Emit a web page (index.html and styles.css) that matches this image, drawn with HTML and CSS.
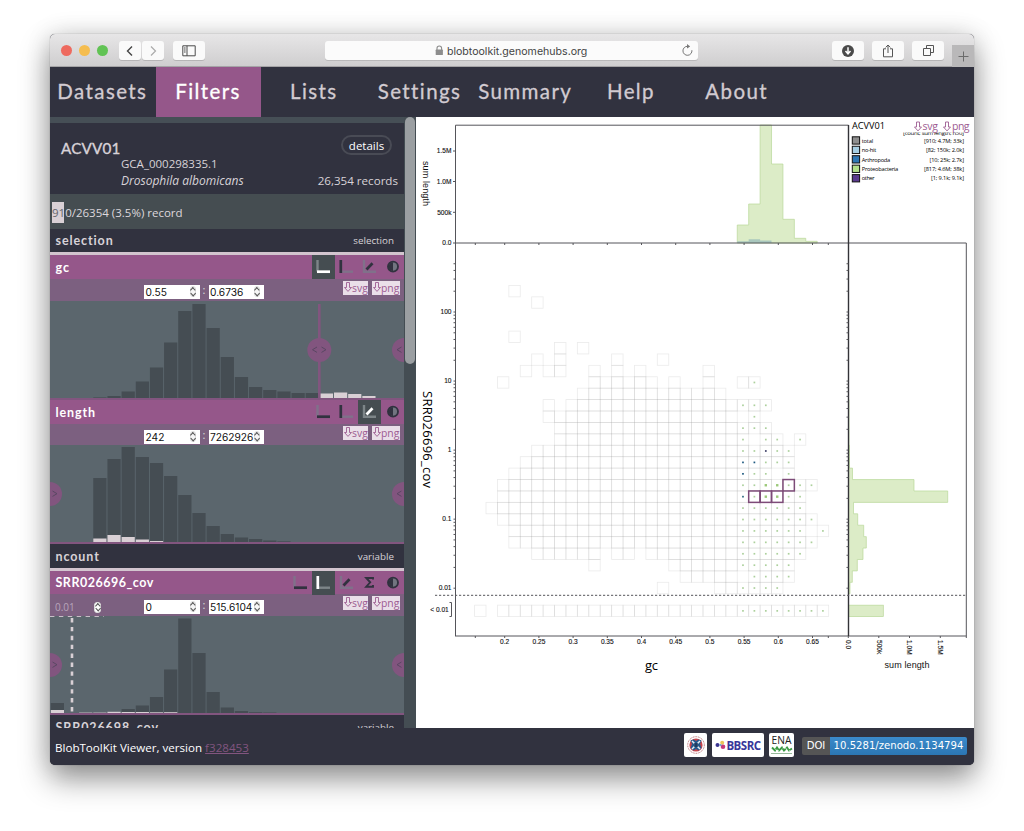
FILE: index.html
```
<!DOCTYPE html>
<html lang="en">
<head>
<meta charset="utf-8">
<title>BlobToolKit Viewer</title>
<link rel="stylesheet" href="styles.css">
</head>
<body>
<svg class="defs" width="0" height="0">
  <defs>
    <g id="i-x"><path class="dim" d="M1.500 1v11.500"/><path class="hot" d="M1 12.700h13"/></g>
    <g id="i-y"><path class="dim" d="M1 12.700h13"/><path class="hot" d="M1.800 1v13"/></g>
    <g id="i-z"><path class="dim" d="M2 1v11.700h12"/><path class="hot" d="M4.500 10.500l6-6.200"/></g>
    <g id="i-s"><path class="sig" d="M11 4.600V3H4.200l4 4.300-4 4.400H11V10"/></g>
    <g id="i-c"><circle class="ring" cx="8" cy="7.600" r="5"/><path class="half" d="M8 3.200a4.400 4.400 0 0 0 0 8.800z"/></g>
    <path id="i-down" d="M2.500.5h3v5h2L4 9.400.5 5.500h2z" fill="none" stroke="#9d5c92" stroke-width=".9"/>
  </defs>
</svg>
<div class="window">
  <div class="toolbar">
    <div class="lights"><i class="red"></i><i class="yellow"></i><i class="green"></i></div>
    <div class="pair">
      <span class="btn"><svg width="10" height="12"><path d="M7 1.500L2.500 6 7 10.500" fill="none" stroke="#444" stroke-width="1.400"/></svg></span>
      <span class="btn"><svg width="10" height="12"><path d="M3 1.500L7.500 6 3 10.500" fill="none" stroke="#aaa" stroke-width="1.200"/></svg></span>
    </div>
    <span class="btn wide side"><svg width="14" height="12"><path d="M.8.8h12.400v10H.8zM5 .8v10M2 3h1.600M2 5h1.600M2 7h1.600" fill="none" stroke="#4a4a4a"/></svg></span>
    <div class="address">
      <svg class="lock" width="9" height="11"><path d="M2 5V3.300a2.300 2.300 0 0 1 4.600 0V5" fill="none" stroke="#8d8d8d" stroke-width="1.100"/><rect x=".7" y="4.600" width="7.200" height="5.400" rx=".6" fill="#8d8d8d"/></svg>
      <span class="url">blobtoolkit.genomehubs.org</span>
      <svg class="reload" width="13" height="13"><path d="M10.900 6.200A4.500 4.500 0 1 1 6.500 2.300" fill="none" stroke="#777"/><path d="M6 0l3.200 2.400L6 4.600z" fill="#777"/></svg>
    </div>
    <div class="actions">
      <span class="btn wide"><svg width="14" height="14"><circle cx="7" cy="7" r="6" fill="#4a4a4a"/><path d="M7 3.300v6M4.500 7L7 9.800 9.500 7" fill="none" stroke="#fff" stroke-width="1.500"/></svg></span>
      <span class="btn wide"><svg width="12" height="14"><path d="M4 4.800H1.500v8h9v-8H8M6 9V1.200M3.700 3.400L6 1l2.300 2.400" fill="none" stroke="#555"/></svg></span>
      <span class="btn wide"><svg width="13" height="13"><path d="M1.500 4.500h7v7h-7zM4.500 4V1.500h7v7H9" fill="none" stroke="#555"/></svg></span>
    </div>
    <span class="plus"><svg width="11" height="11"><path d="M5.500.5v10M.5 5.500h10" stroke="#6b6b6b"/></svg></span>
  </div>

  <nav class="nav">
    <a><span>Datasets</span></a><a class="current"><span>Filters</span></a><a><span>Lists</span></a><a><span>Settings</span></a><a><span>Summary</span></a><a><span>Help</span></a><a><span>About</span></a>
  </nav>

  <div class="main">
    <div class="sidebar">
      <div class="scroller">
        <section class="dataset">
          <div class="top"><h1>ACVV01</h1><span class="details">details</span></div>
          <p class="accession">GCA_000298335.1</p>
          <p class="taxon"><em>Drosophila albomicans</em><span>26,354 records</span></p>
        </section>
        <div class="count"><span class="fill"></span><span class="label"><b>91</b>0/26354 (3.5%) record</span></div>
        <div class="closed first"><h2>selection</h2><span>selection</span></div>

        <section class="filter">
          <header><h2>gc</h2>
            <div class="icons">
              <span class="on"><svg><use href="#i-x"/></svg></span><span><svg><use href="#i-y"/></svg></span><span><svg><use href="#i-z"/></svg></span><span><svg><use href="#i-c"/></svg></span>
            </div>
          </header>
          <div class="range">
            <span class="field">0.55<i class="step"></i></span><em>:</em><span class="field">0.6736<i class="step"></i></span>
            <span class="save"><svg><use href="#i-down"/></svg>svg</span><span class="save"><svg><use href="#i-down"/></svg>png</span>
          </div>
          <svg class="hist" id="hist-gc" viewBox="0 0 354 97"></svg>
        </section>

        <section class="filter length">
          <header><h2>length</h2>
            <div class="icons">
              <span><svg><use href="#i-x"/></svg></span><span><svg><use href="#i-y"/></svg></span><span class="on"><svg><use href="#i-z"/></svg></span><span><svg><use href="#i-c"/></svg></span>
            </div>
          </header>
          <div class="range">
            <span class="field">242<i class="step"></i></span><em>:</em><span class="field">7262926<i class="step"></i></span>
            <span class="save"><svg><use href="#i-down"/></svg>svg</span><span class="save"><svg><use href="#i-down"/></svg>png</span>
          </div>
          <svg class="hist" id="hist-length" viewBox="0 0 354 97"></svg>
        </section>

        <div class="closed second"><h2>ncount</h2><span>variable</span></div>

        <section class="filter cov">
          <header><h2>SRR026696_cov</h2>
            <div class="icons">
              <span><svg><use href="#i-x"/></svg></span><span class="on"><svg><use href="#i-y"/></svg></span><span><svg><use href="#i-z"/></svg></span><span><svg><use href="#i-s"/></svg></span><span><svg><use href="#i-c"/></svg></span>
            </div>
          </header>
          <div class="range">
            <span class="clamp">0.01<i class="step"></i></span>
            <span class="field">0<i class="step"></i></span><em>:</em><span class="field">515.6104<i class="step"></i></span>
            <span class="save"><svg><use href="#i-down"/></svg>svg</span><span class="save"><svg><use href="#i-down"/></svg>png</span>
          </div>
          <svg class="hist" id="hist-cov" viewBox="0 0 354 97"></svg>
        </section>

        <div class="closed last"><h2>SRR026698_cov</h2><span>variable</span></div>
      </div>
      <div class="track"><div class="thumb"></div></div>
    </div>
    <svg class="plot" id="plot" viewBox="416 117 558 611">
      <g id="bars"></g>
      <g id="cells"></g>
      <g id="axes"></g>
      <g class="axis-title">
        <text transform="translate(422.500 391) rotate(90)" font-size="13" textLength="97">SRR026696_cov</text>
        <text x="645" y="670" font-size="13" textLength="13">gc</text>
      </g>
      <g class="small-title">
        <text transform="translate(423 161) rotate(90)" textLength="45">sum length</text>
        <text x="884.500" y="668" textLength="45">sum length</text>
      </g>
      <g id="legend">
        <text x="852" y="129" font-size="9.200" textLength="33">ACVV01</text>
        <text x="903" y="135" font-size="6" textLength="61">[count; sum length; n50]</text>
        <rect x="895" y="124" width="78" height="8.500" fill="#fff"/>
      </g>
      <g class="download">
        <use href="#i-down" x="914" y="121.500"/><text x="922.500" y="129.500" textLength="15.500">svg</text>
        <use href="#i-down" x="943" y="121.500"/><text x="952" y="129.500" textLength="17.500">png</text>
      </g>
    </svg>
  </div>

  <footer class="footer">
    <span class="version">BlobToolKit Viewer, version <a>f328453</a></span>
    <div class="logos">
      <span class="logo crest"><svg width="18" height="18"><circle cx="9" cy="9" r="8.300" fill="none" stroke="#b56a70" stroke-width="1" stroke-dasharray="1 .7"/><circle cx="9" cy="9" r="6.600" fill="#c9444c"/><path d="M3.500 4.500l3-1L9 5l2.500-1.500 3 1L13 8l1.500 4-3 2.500L9 13l-2.500 1.500-3-2.500L5 8z" fill="#245b8f"/><path d="M5 5l8 8M13 5l-8 8" stroke="#e8eef3" stroke-width="1.500"/><rect x="7.200" y="7" width="3.600" height="4" fill="#1c3c63"/></svg></span>
      <span class="logo bbsrc"><svg width="11" height="12"><circle cx="2.500" cy="6" r="2" fill="#3a3390"/><circle cx="7.200" cy="3.800" r="2" fill="#ecc45a"/><circle cx="8" cy="7.800" r="2.300" fill="#c7397c"/><circle cx="5.500" cy="6" r="1.100" fill="#6ea0d0"/></svg><b>BBSRC</b></span>
      <span class="logo ena"><b>ENA</b><svg width="22" height="9"><path d="M1 1.500l3 3 2-3 2 3 3-3 2 3 3-3 2 3 3-2" fill="none" stroke="#3c9a45" stroke-width="1.900" stroke-dasharray="5 .6"/><path d="M0 7.500h21" stroke="#7ca883" stroke-width=".8"/></svg></span>
      <span class="doi"><i>DOI</i><b>10.5281/zenodo.1134794</b></span>
    </div>
  </footer>
</div>
<script src="charts.js"></script>
</body>
</html>
```
FILE: styles.css
```
* { box-sizing: border-box; }
body { margin: 0; padding: 34px 50px; height: 831px; background: #fff; font-family: "Open Sans", "Noto Sans", sans-serif; overflow: hidden; }
h1, h2, p { margin: 0; font-weight: 400; }
svg { display: block; flex: none; }
.defs { position: absolute; }
.window {
  width: 924px; height: 731px; display: flex; flex-direction: column;
  border-radius: 5px; overflow: hidden; background: #31323f;
  box-shadow: 0 14px 30px rgba(0, 0, 0, .42), 0 0 26px rgba(0, 0, 0, .12), 0 0 1px rgba(0, 0, 0, .5);
}

/* browser chrome */
.toolbar { height: 33px; flex: none; display: flex; align-items: flex-start; background: linear-gradient(#e7e6e7, #cfcecf); border-bottom: 1px solid #a5a4a6; padding-left: 11px; }
.lights { display: flex; gap: 6.500px; margin-top: 11px; }
.lights i { width: 11.300px; height: 11.300px; border-radius: 50%; }
.red { background: #ee6a5f; }
.yellow { background: #f5bd4f; }
.green { background: #61c354; }
.pair { display: flex; gap: 1px; margin: 7px 0 0 11px; }
.btn { width: 22px; height: 19px; border-radius: 3px; background: #fafafa; box-shadow: 0 1px 0 rgba(0, 0, 0, .14); display: flex; align-items: center; justify-content: center; }
.btn.wide { width: 32px; }
.side { margin: 7px 0 0 9px; }
.address { width: 373px; height: 19px; margin: 7px 0 0 120.500px; border-radius: 3px; background: #fbfbfb; box-shadow: 0 1px 0 rgba(0, 0, 0, .12); display: flex; align-items: center; padding-left: 109.500px; }
.url { font: 10.600px Inter, sans-serif; color: #444; margin: 2px 0 0 3px; flex: 1; white-space: nowrap; }
.reload { margin-right: 4px; }
.actions { display: flex; gap: 8px; margin: 7px 0 0 134px; }
.plus { width: 22px; height: 22px; margin: 11px 0 0 auto; background: #b9b8b9; display: flex; align-items: center; justify-content: center; }

/* navigation */
.nav { height: 50px; flex: none; display: flex; width: 740px; }
.nav a { flex: 1 1 0; display: flex; align-items: center; justify-content: center; color: #d2cbd1; font: 20.500px/50px Lato, sans-serif; letter-spacing: 1.400px; padding: 0 1px 3px 0; -webkit-text-stroke: .3px; }
.nav .current { background: #95578a; color: #fff; }

.main { height: 611px; flex: none; display: flex; }
.sidebar { width: 366px; display: flex; background: #464f56; }
.scroller { width: 354px; height: 611px; overflow: hidden; padding-top: 6px; display: flex; flex-direction: column; }
.scroller > * { flex: none; }
.track { width: 12px; background: #444d53; padding: 0 1px; }
.thumb { height: 247px; border-radius: 5px; background: #9b9fa2; }

.dataset { height: 71px; background: #31323f; color: #d8d2d8; padding: 12px 6px 0 11px; }
.top { display: flex; justify-content: space-between; height: 21px; }
.top h1 { font: 15.200px/27px Lato, sans-serif; letter-spacing: .2px; -webkit-text-stroke: .35px; }
.details { border: 2px solid #494b55; border-radius: 10px; width: 51px; height: 20px; margin-right: 6px; font-size: 11.500px; line-height: 17px; text-align: center; color: #fff; }
.accession { font-size: 11.500px; line-height: 16px; padding-left: 60px; }
.taxon { display: flex; justify-content: space-between; font-size: 11.600px; line-height: 17px; padding-left: 60px; }
.taxon em { font-size: 12px; }
.count { height: 35px; background: #454d51; display: flex; align-items: center; padding: 1px 0 0 2px; font-size: 11.500px; color: #ddd8dd; }
.fill { width: 12px; height: 21px; background: #d9d0d5; margin-right: -12px; }
.label { position: relative; }
.label b { font-weight: 400; color: #66676d; }

.closed { height: 24px; background: #31323f; color: #d8d2d8; display: flex; justify-content: space-between; align-items: center; padding: 0 10px 0 5.500px; font-size: 9.800px; }
.closed h2, .filter h2 { font: 700 12.500px Lato, sans-serif; letter-spacing: .9px; }
.first { height: 26px; border-bottom: 3px solid #d3c5cf; }
.second { height: 27px; border-bottom: 3px solid #d3c5cf; }

.filter { border-bottom: 2px solid #82557f; height: 145px; }
.filter.length, .filter.cov { height: 144px; }
.filter.length .range { height: 21px; }
.filter header { height: 24px; background: #95578a; display: flex; justify-content: space-between; align-items: center; padding-left: 5.500px; color: #fff; }
.filter.cov header { height: 23px; }
.filter.cov h2 { letter-spacing: .5px; }
.icons { display: flex; }
.icons span { width: 23px; height: 100%; min-height: 23px; padding: 4px; }
.icons svg { width: 16px; height: 16px; --dim: #80718a; --hot: #31323f; }
.icons .on { background: #454d51; }
.icons .on svg { --dim: #7d8588; --hot: #fff; }
.dim { stroke: var(--dim); stroke-width: 2.400; fill: none; }
.hot { stroke: var(--hot); stroke-width: 2.700; fill: none; stroke-linecap: butt; }
.sig { stroke: #31323f; stroke-width: 1.900; fill: none; }
.ring { fill: #727580; stroke: #31323f; stroke-width: 1.900; }
.half { fill: #31323f; }
.range { height: 22px; background: #7c6080; display: flex; align-items: flex-start; padding: 3px 4px 0 94px; }
.field { width: 55.500px; height: 14px; margin-top: 2.500px; background: #fff; color: #111; font: 10.200px/14px Inter, sans-serif; padding: 0 4px 0 1.500px; display: flex; justify-content: space-between; align-items: center; }
.range em { width: 9px; text-align: center; color: #ddd; font-style: normal; font-size: 11px; line-height: 16px; }
.step { width: 6px; height: 11px; border-radius: 3px; background: #f6f6f6; border: 1px solid #ddd; display: flex; flex-direction: column; align-items: center; justify-content: space-between; padding: 1px 0; }
.step::before, .step::after { content: ""; width: 3px; height: 3px; border: solid #555; border-width: .8px 0 0 .8px; transform: rotate(45deg); }
.step::after { transform: rotate(225deg); }
.save { width: 25px; height: 14px; background: #eadfe9; color: #9d5c92; font-size: 10.400px; line-height: 12px; display: flex; padding: 1px 0 0 1px; margin-top: -1px; }
.save svg { width: 8px; height: 10px; }
.save + .save { width: 28px; margin-left: 4px; }
.field + .save { margin-left: auto; }
.clamp { width: 46px; margin: 3px 43px 0 -89px; display: flex; justify-content: space-between; align-items: center; color: #b8a5bb; font-size: 10px; line-height: 14px; }
.clamp .step { background: #fff; width: 7px; }
.hist { width: 354px; height: 97px; background: #5b666d; }
.bar { fill: #454d53; }
.picked { fill: #d9d0d5; }
.handle { fill: #82557f; }
.grip { fill: none; stroke: #5a4763; stroke-width: 1; }

/* plot */
.plot { width: 558px; height: 611px; background: #fff; }
.plot text { font-family: "Open Sans", "Noto Sans", sans-serif; }
.plot .tick, .plot .small-title text { font-family: "Liberation Sans", Arial, sans-serif; fill: #111; }
.tick { font-size: 6.600px; stroke: #111; stroke-width: .12px; }
.small-title { font-size: 9px; }
.frame { fill: none; stroke: #55555a; stroke-width: 1; }
.heavy { stroke: #333338; stroke-width: 1.400; }
.cell { fill: none; stroke: #999; stroke-opacity: .2; stroke-width: .8; }
.chosen { fill: none; stroke: #7d4b78; stroke-width: 1.500; }
.green-bars { fill: #dcecc7; stroke: #b9d89a; stroke-width: .7; }
.download text { font-size: 10.500px; fill: #9d5c92; }

/* footer */
.footer { flex: 1; display: flex; justify-content: space-between; align-items: flex-start; padding: 5px 7px 0 5px; background: #31323f; color: #fff; }
.version { font-size: 11.600px; line-height: 29px; }
.version a { color: #82557f; text-decoration: underline; }
.logos { display: flex; gap: 5px; }
.logo { height: 24px; border-radius: 2px; background: #fff; display: flex; align-items: center; justify-content: center; }
.crest { width: 23px; }
.bbsrc { width: 52px; }
.bbsrc b { font: 700 11.500px "Open Sans", sans-serif; letter-spacing: -.5px; color: #38379a; }
.ena { width: 25px; flex-direction: column; justify-content: flex-start; }
.ena b { font: 10.200px/14px "Open Sans", sans-serif; height: 13px; color: #222; }
.doi { display: flex; height: 18px; margin: 4px 0 0 3px; border-radius: 2px; overflow: hidden; font: 10.100px/17px "DejaVu Sans", sans-serif; }
.doi i { width: 28px; background: #555; font-style: normal; text-align: center; }
.doi b { width: 137px; background: linear-gradient(#3b8acb, #2b76b3); font-weight: 400; text-align: center; white-space: nowrap; }
```
FILE: charts.js
```
const NS = 'http://www.w3.org/2000/svg';
function add(parent, tag, attrs, text) {
  const el = document.createElementNS(NS, tag);
  for (const k in attrs) el.setAttribute(k, attrs[k]);
  if (text !== undefined) el.textContent = text;
  parent.appendChild(el);
  return el;
}
const byId = id => document.getElementById(id);

// Sidebar histograms: 25 bins over 354px
function histogram(id, all, picked) {
  const svg = byId(id);
  const draw = (data, cls) => {
    for (const i in data) add(svg, 'rect', { class: cls, x: i * 14.16 + 0.8, y: 97 - data[i], width: 13.2, height: data[i] });
  };
  draw(all, 'bar');
  draw(picked, 'picked');
  return svg;
}
function handle(svg, x, path) {
  add(svg, 'circle', { class: 'handle', cx: x, cy: 49, r: 12 });
  add(svg, 'path', { class: 'grip', d: path });
}
const RIGHT = 'M351.500 46l-4.500 2.700 4.500 2.700';
const LEFT = 'M2.500 46l4.500 2.700-4.500 2.700';

const gc = histogram('hist-gc',
  { 3: .6, 4: 2, 5: 6.5, 6: 16.5, 7: 30.5, 8: 55.5, 9: 87, 10: 94, 11: 70, 12: 41, 13: 21, 14: 11, 15: 8, 16: 6.5, 17: 5, 18: 5 },
  { 19: 4.5, 20: 5.5, 21: 4, 22: 2 });
add(gc, 'rect', { class: 'handle', x: 268, y: 3, width: 2.6, height: 94 });
handle(gc, 269.300, 'M267 46l-4.500 2.700 4.500 2.700M271.500 46l4.500 2.700-4.500 2.700');
handle(gc, 354, RIGHT);

const len = histogram('hist-length',
  { 3: 64, 4: 83, 5: 95, 6: 85, 7: 79, 8: 66, 9: 47, 10: 29, 11: 16, 12: 8, 13: 4.5, 14: 3, 15: 1.5, 16: .7 },
  { 3: 3.5, 4: 7, 5: 5, 6: 2.5, 7: 1 });
handle(len, 0, LEFT);
handle(len, 354, RIGHT);

const cov = histogram('hist-cov',
  { 0: 10, 5: 4, 6: 7.5, 7: 16, 8: 43.5, 9: 94.5, 10: 60, 11: 21, 12: 5.5, 13: 2, 14: .8, 15: .5 },
  { 0: 3, 2: .4, 3: .4, 4: 1.2, 5: 1, 6: 1, 7: .7, 8: .8 });
add(cov, 'path', { d: 'M22 2v95', stroke: '#d9d0d5', 'stroke-width': 2.6, 'stroke-dasharray': '4.4 4.5' });
add(cov, 'path', { d: 'M0 .5h54', stroke: '#c9bfc8', 'stroke-width': 1.2, 'stroke-dasharray': '4.4 4.5' });
handle(cov, 0, LEFT);
handle(cov, 354, RIGHT);

// Main plot
const P = 11.42, X0 = 474.6, Y0 = 285.4;
const cx = c => X0 + P * c, cy = r => Y0 + P * r;
const rows = {
  0: [[3, 3]], 1: [[5, 5]], 4: [[3, 3]], 5: [[7, 7], [9, 9]], 6: [[5, 5], [7, 7], [12, 12], [16, 16]],
  7: [[4, 4], [6, 7], [10, 10], [12, 12], [14, 14], [20, 20]],
  8: [[2, 2], [10, 15], [17, 17], [20, 20], [23, 24]],
  9: [[9, 21]], 10: [[6, 6], [8, 25]], 11: [[6, 22], [24, 24]], 12: [[7, 25]], 13: [[7, 23], [25, 26], [28, 28]],
  14: [[5, 27]], 15: [[4, 27]], 16: [[3, 25], [27, 27]], 17: [[2, 29]], 18: [[2, 28]], 19: [[1, 28]],
  20: [[2, 29]], 21: [[3, 28], [30, 30]], 22: [[3, 29]], 23: [[5, 10], [12, 13], [15, 28]],
  24: [[10, 10], [17, 27]], 25: [[18, 22], [24, 27]], 26: [[16, 16], [21, 26]], 28: [[0, 0], [2, 30]]
};
const cells = byId('cells');
const noDot = new Set(['8,23']);
const accents = { '14,25': '#3d3f67', '15,23': '#1f5a80', '15,24': '#1f5a80', '16,23': '#1f5a80', '18,23': '#2a6a80' };
for (const r in rows) for (const [a, b] of rows[r]) for (let c = a; c <= b; c++) {
  const key = r + ',' + c;
  add(cells, 'rect', { class: 'cell', x: cx(c), y: cy(r), width: P, height: P });
  if (c >= 23 && !noDot.has(key)) {
    const big = (r == 17 || r == 18) && (c == 25 || c == 26);
    const s = big ? 2.4 : 1.7;
    add(cells, 'rect', { x: cx(c) + (P - s) / 2, y: cy(r) + (P - s) / 2, width: s, height: s, fill: accents[key] || (big ? '#9cc979' : '#acd09c') });
  }
}
for (const [c, r] of [[24, 18], [25, 18], [26, 18], [27, 17]])
  add(cells, 'rect', { class: 'chosen', x: cx(c), y: cy(r), width: P, height: P });

// Marginal histograms
const bars = byId('bars');
const tops = [225, 204, 125, 164, 219.3, 238.3, 241.3];
let d = `M${cx(23)} 243`;
tops.forEach((y, i) => { d += `V${y}H${cx(24 + i)}`; });
add(bars, 'path', { class: 'green-bars', d: d + 'V243z' });
add(bars, 'path', { d: `M${cx(23)} 243V241.300H${cx(24)}V239.300H${cx(25)}V240.500H${cx(26)}V243z`, fill: '#a9c7bd' });
const side = { 10: 849, 11: 849, 12: 849, 13: 849, 14: 849.5, 15: 849.5, 16: 852.5, 17: 914, 18: 947.7, 19: 853.5, 20: 857.7, 21: 863.7, 22: 866.3, 23: 863, 24: 857.3, 25: 852.3, 26: 850 };
d = `M848.500 ${cy(10)}`;
for (const r in side) d += `H${side[r]}V${cy(+r + 1)}`;
add(bars, 'path', { class: 'green-bars', d: d + 'H848.500z' });
add(bars, 'rect', { class: 'green-bars', x: 848.5, y: cy(28), width: 34.8, height: P });

// Axes
const axes = byId('axes');
const line = (p, cls = 'frame') => add(axes, 'path', { class: cls, d: p });
line('M455.500 636V125.200H848.500M455 243H966.300V636H455');
line('M848.500 125V636', 'frame heavy');
add(axes, 'path', { class: 'frame', d: 'M435 595.300H966', 'stroke-dasharray': '2.2 1.8' });
line('M449.500 602.500H451.500V616.500H449.500');
const tick = (x, y, t, anchor) => add(axes, 'text', { class: 'tick', x, y, 'text-anchor': anchor }, t);
const xt = [475.3, 828.3];
['0.2', '0.25', '0.3', '0.35', '0.4', '0.45', '0.5', '0.55', '0.6', '0.65'].forEach((t, i) => {
  const x = 504.7 + i * 34.2;
  xt.push(x);
  tick(x, 644.300, t, 'middle');
});
xt.forEach(x => line(`M${x} 636v2M${x} 243v2`));
[['1.5M', 151], ['1.0M', 181.500], ['500k', 212.300], ['0.0', 243]].forEach(([t, y]) => { tick(451.500, y + 2.2, t, 'end'); line(`M453 ${y}h2.500`); });
for (let e = -2; e <= 2; e++) {
  const y = 312 - (e - 2) * 69.05;
  tick(451.500, y + 2.2, ['0.01', '0.1', '1', '10', '100'][e + 2], 'end');
  for (let m = 1; m < 10; m++) {
    if (e === 2 && m > 5) break;
    const yy = y - Math.log10(m) * 69.05;
    line(`M453.500 ${yy}h2M846.500 ${yy}h2`);
  }
}
tick(448.800, 611.700, '< 0.01', 'end');
[['0.0', 848.300], ['500k', 878.800], ['1.0M', 909.500], ['1.5M', 940.300]].forEach(([t, x]) => {
  line(`M${x} 636v2`);
  add(axes, 'text', { class: 'tick', transform: `translate(${x - 2.2} 640) rotate(90)` }, t);
});
line('M966.300 636v2');

// Legend
const legend = byId('legend');
[['total', '[910; 4.7M; 33k]', '#8f8f8f', 11.5, 40], ['no-hit', '[82; 150k; 2.0k]', '#a6cee3', 14.5, 38],
 ['Arthropoda', '[10; 25k; 2.7k]', '#2f77b4', 28.500, 34.500], ['Proteobacteria', '[817; 4.6M; 38k]', '#b2df8a', 36.500, 40],
 ['other', '[1; 9.1k; 9.1k]', '#5b3a8e', 13, 33]].forEach(([name, val, color, w, vw], i) => {
  const y = 136.800 + i * 9.450;
  add(legend, 'rect', { x: 852.300, y, width: 7.300, height: 7.300, fill: color, stroke: '#111', 'stroke-width': 1 });
  add(legend, 'text', { x: 861.700, y: y + 5.800, 'font-size': 5.700, textLength: w }, name);
  add(legend, 'text', { x: 964 - vw, y: y + 5.800, 'font-size': 5.700, textLength: vw }, val);
});
```
